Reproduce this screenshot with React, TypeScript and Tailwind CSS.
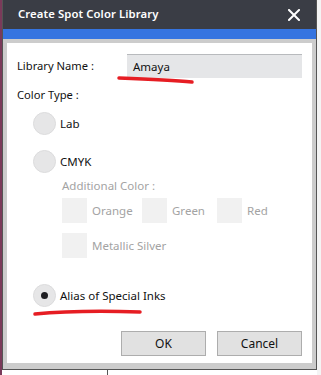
import React from "react";

const font = { fontFamily: '"Noto Sans", "Open Sans", sans-serif' };

function Radio({ checked = false }: { checked?: boolean }) {
  return (
    <div className="w-[23px] h-[23px] rounded-full bg-[#e6e6e7] border border-[#dcdcdd] flex items-center justify-center shrink-0">
      {checked && <div className="w-[7px] h-[7px] rounded-full bg-[#1e1e22]" />}
    </div>
  );
}

function Check({ label }: { label: string }) {
  return (
    <div className="flex items-center">
      <div className="w-[25px] h-[25px] bg-[#f1f1f1] shrink-0" />
      <span className="ml-[5px] text-[11.5px] text-[#a3a3a3]">{label}</span>
    </div>
  );
}

export default function App() {
  return (
    <div className="w-[321px] h-[375px] bg-white relative overflow-hidden" style={font}>
      <div className="absolute left-0 top-0 w-[2px] h-[375px] bg-[#7a3a5a]" />
      <div className="absolute left-[317px] top-0 w-[4px] h-[375px] bg-[#f4f4f4]" />
      <div className="ml-[2px] w-[315px] h-[370px] flex flex-col border-x border-b border-[#555555] bg-[#cccccc]">
        <div className="h-[29px] bg-[#3a3d45] flex items-center justify-between pl-[15px] pr-[16px] shrink-0">
          <span className="text-white text-[11.3px] font-semibold tracking-[0.1px]">Create Spot Color Library</span>
          <svg width="12" height="12" viewBox="0 0 12 12">
            <path d="M1 1 L11 11 M11 1 L1 11" stroke="white" strokeWidth="2" strokeLinecap="square" />
          </svg>
        </div>
        <div className="h-[10px] bg-[#3574e0] shrink-0" />
        <div className="flex-1 px-[4px] pt-[4px] pb-[6px] flex">
          <div className="flex-1 bg-white relative flex flex-col pl-[10px] pr-[10px] text-[11.5px] text-[#111]">
            <div className="mt-[11px] flex items-center h-[24px]">
              <span className="w-[110px] text-[11.2px]">Library Name :</span>
              <div className="flex-1 h-[24px] bg-[#e5e6e8] border-t border-[#b8babd] flex items-center pl-[6px] text-[11.5px]">Amaya</div>
            </div>
            <div className="mt-[8px] h-[18px] flex items-center text-[11.2px]">Color Type :</div>
            <div className="mt-[8px] ml-[16px] flex items-center gap-[4px] h-[23px]">
              <Radio />
              <span>Lab</span>
            </div>
            <div className="mt-[15px] ml-[16px] flex items-center gap-[4px] h-[23px]">
              <Radio />
              <span>CMYK</span>
            </div>
            <div className="mt-[5px] ml-[45px] h-[16px] flex items-center text-[#a3a3a3]">Additional Color :</div>
            <div className="mt-[4px] ml-[45px] flex">
              <div className="w-[80px]"><Check label="Orange" /></div>
              <div className="w-[75px]"><Check label="Green" /></div>
              <Check label="Red" />
            </div>
            <div className="mt-[10px] ml-[45px] flex">
              <Check label="Metallic Silver" />
            </div>
            <div className="mt-[26px] ml-[16px] flex items-center gap-[4px] h-[23px]">
              <Radio checked />
              <span>Alias of Special Inks</span>
            </div>
            <div className="mt-[24px] flex justify-end gap-[11px]">
              <button className="w-[85px] h-[25px] bg-[#e1e1e1] border border-[#adadad] text-[12px] text-[#111]">OK</button>
              <button className="w-[85px] h-[25px] bg-[#e1e1e1] border border-[#adadad] text-[12px] text-[#111]">Cancel</button>
            </div>
            <svg className="absolute left-0 top-0 pointer-events-none" width="305" height="319" viewBox="0 0 305 319">
              <path d="M112 35 C140 36 165 37 185 39" stroke="#e61d23" strokeWidth="3.5" strokeLinecap="round" fill="none" />
              <path d="M28 271 C60 268 100 268 133 269" stroke="#e61d23" strokeWidth="3.5" strokeLinecap="round" fill="none" />
            </svg>
          </div>
        </div>
      </div>
      <div className="absolute left-[107px] top-[370px] w-[1px] h-[5px] bg-[#555]" />
    </div>
  );
}
